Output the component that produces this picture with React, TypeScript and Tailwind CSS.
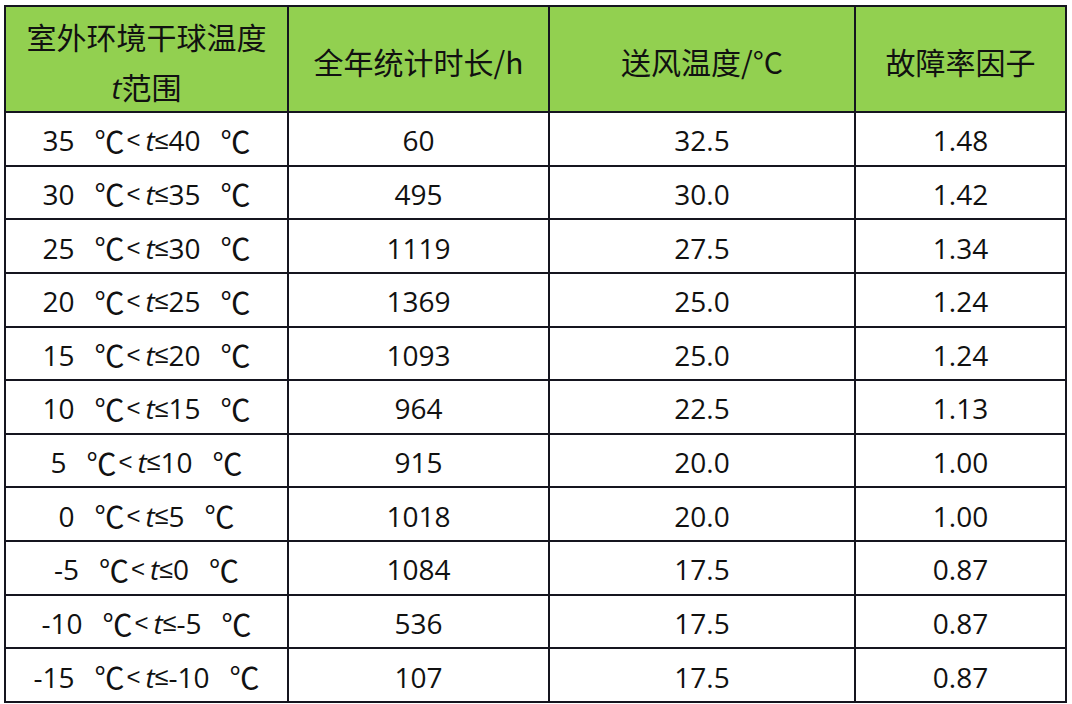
import React from "react";

const rows: [string, string, string, string, string][] = [
  ["35", "40", "60", "32.5", "1.48"],
  ["30", "35", "495", "30.0", "1.42"],
  ["25", "30", "1119", "27.5", "1.34"],
  ["20", "25", "1369", "25.0", "1.24"],
  ["15", "20", "1093", "25.0", "1.24"],
  ["10", "15", "964", "22.5", "1.13"],
  ["5", "10", "915", "20.0", "1.00"],
  ["0", "5", "1018", "20.0", "1.00"],
  ["-5", "0", "1084", "17.5", "0.87"],
  ["-10", "-5", "536", "17.5", "0.87"],
  ["-15", "-10", "107", "17.5", "0.87"],
];

const head =
  "bg-[#92d050] flex items-center justify-center text-[30px] pt-[5px] font-['Noto_Sans_CJK_SC','Noto_Sans',sans-serif]";
const cell =
  "bg-white flex items-center justify-center text-[28px] pt-[3px] font-['Open_Sans','Noto_Sans_CJK_SC',sans-serif]";

export default function App() {
  return (
    <div className="w-[1072px] h-[704px] bg-white pl-[4px] pt-[5px]">
      <div className="w-[1063px] h-[698px] bg-[#15151f] p-[2px] grid grid-cols-[281px_259px_304px_209px] grid-rows-[104px_repeat(11,minmax(0,1fr))] gap-[2px] text-[#111]">
        <div className={head + " flex-col leading-[50px]"}>
          <div>室外环境干球温度</div>
          <div>
            <span className="italic font-['Open_Sans',sans-serif]">t</span>范围
          </div>
        </div>
        <div className={head}>全年统计时长/h</div>
        <div className={head}>送风温度/°C</div>
        <div className={head}>故障率因子</div>
        {rows.map((r, i) => (
          <React.Fragment key={i}>
            <div className={cell + " whitespace-pre"}>
              <span>{r[0]}</span>
              <span className="ml-[20px] text-[30px] font-['Noto_Sans_CJK_SC',sans-serif]">℃</span>
              <span className="ml-[2px] text-[24px] font-['Liberation_Sans',sans-serif]">&lt;</span>
              <span className="ml-[5px] italic">t</span>
              <span className="text-[25px] font-['Liberation_Sans',sans-serif]">≤</span>
              <span>{r[1]}</span>
              <span className="ml-[20px] text-[30px] font-['Noto_Sans_CJK_SC',sans-serif]">℃</span>
            </div>
            <div className={cell}>{r[2]}</div>
            <div className={cell}>{r[3]}</div>
            <div className={cell}>{r[4]}</div>
          </React.Fragment>
        ))}
      </div>
    </div>
  );
}
